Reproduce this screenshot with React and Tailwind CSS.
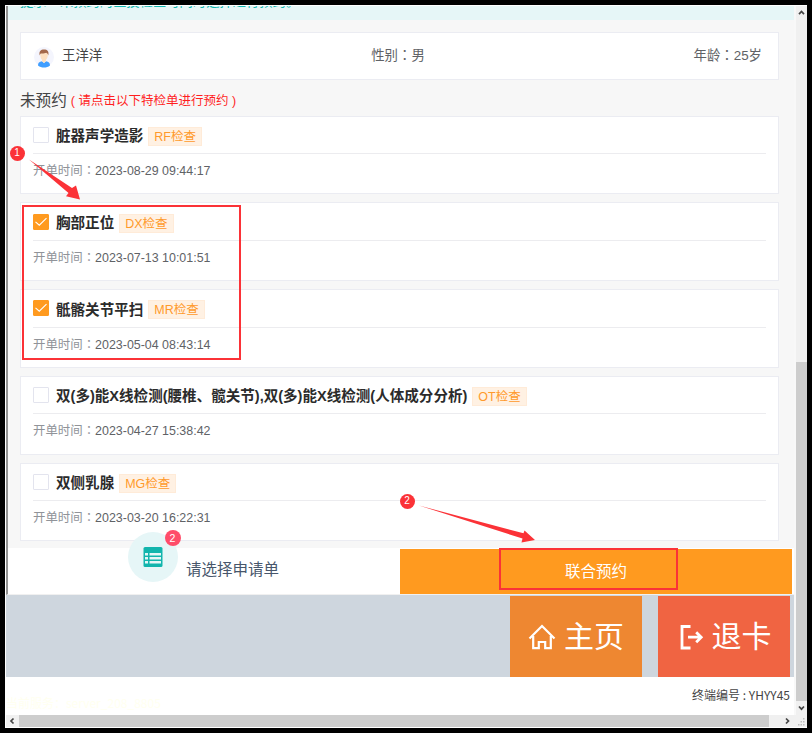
import React, { useState } from 'react';

const initialOrders = [
  { id: 1, name: '脏器声学造影', tag: 'RF检查', time: '2023-08-29 09:44:17', checked: false },
  { id: 2, name: '胸部正位', tag: 'DX检查', time: '2023-07-13 10:01:51', checked: true },
  { id: 3, name: '骶髂关节平扫', tag: 'MR检查', time: '2023-05-04 08:43:14', checked: true },
  { id: 4, name: '双(多)能X线检测(腰椎、髋关节),双(多)能X线检测(人体成分分析)', tag: 'OT检查', time: '2023-04-27 15:38:42', checked: false },
  { id: 5, name: '双侧乳腺', tag: 'MG检查', time: '2023-03-20 16:22:31', checked: false }
];

// full-width colon, centred in its box
const Colon = () => <span className="font-['Noto_Sans_CJK_TC',sans-serif] leading-none" lang="zh-TW">：</span>;

const Avatar = () => (
  <svg viewBox="0 0 20 20" className="w-5 h-5 mt-[3px] overflow-visible">
    <circle cx="10" cy="10" r="10" fill="#f4f5fd" />
    <path d="M4 18.500C3.900 16 5.500 14.500 8 14.200L10 16l2-1.800c2.500.3 4.100 1.800 4 4.300-1.700 1.400-3.700 2-6 2s-4.300-.6-6-2z" fill="#409eff" />
    <path d="M6.200 6.500C6.200 4.500 8 4 10 4s3.900.7 3.900 3c0 2.400-.6 4.700-1.900 5.800v1.400L10 16l-2-1.800v-1.400c-1.300-1.100-1.800-3.800-1.800-6.300z" fill="#fde0c0" />
    <path d="M5.700 8.500C4.700 4.500 6.800 2.600 10 2.600c3.400 0 5.200 2 4.300 5.900-.3-1.500-1-2.300-2-2.800-1.500.8-3.800.8-5.300.7-.8.400-1.100 1.100-1.300 2.100z" fill="#a4694a" />
  </svg>
);

const Checkbox = ({ checked, onChange }) => (
  <button
    type="button"
    onClick={onChange}
    className={`w-4 h-4 shrink-0 rounded-[1px] border flex items-center justify-center ${checked ? 'bg-[#ff9a1f] border-[#ff9a1f]' : 'bg-white border-[#e3e4ee]'}`}
  >
    {checked && (
      <svg viewBox="0 0 12 10" className="w-3 h-2.5 shrink-0" fill="none" stroke="#fff" strokeWidth="1.1">
        <path d="M.5 4.800l3.800 3.400L11.500 1.200" />
      </svg>
    )}
  </button>
);

const OrderCard = ({ order, onToggle }) => (
  <div className="h-[78.75px] bg-white border border-[#ebecf2] px-3">
    <div className="h-[37.500px] flex items-center border-b border-[#ececef]">
      <Checkbox checked={order.checked} onChange={() => onToggle(order.id)} />
      <span className="ml-[7px] mt-[2.500px] text-[14.550px] leading-5 font-bold text-[#2b2b2b] whitespace-nowrap">{order.name}</span>
      <span className="ml-[5px] mt-[3px] h-[19px] px-[5px] border border-[#ffebd8] bg-[#fff1e3] text-[12.500px] leading-[18px] text-[#ff9a2b] whitespace-nowrap">
        {order.tag}
      </span>
    </div>
    <div className="pt-2 text-[12.430px] leading-[18px] text-[#606266] whitespace-nowrap">
      <span className="text-[#909399]">开单时间<Colon /></span>{order.time}
    </div>
  </div>
);

const VerticalScrollbar = () => (
  <div className="w-[13px] shrink-0 bg-[#f0f0f0] border-l-2 border-[#f8f8f8] flex flex-col items-center">
    <svg viewBox="0 0 11 14" className="w-[11px] h-[14px]" fill="none" stroke="#444" strokeWidth="1.700">
      <path d="M3 8.200L5.500 5.500 8 8.200" />
    </svg>
    <div className="w-full mt-[342px] h-[340px] bg-[#cdcdcd]" />
    <svg viewBox="0 0 11 14" className="w-[11px] h-[14px]" fill="none" stroke="#444" strokeWidth="1.700">
      <path d="M3 5.500L5.500 8.200 8 5.500" />
    </svg>
  </div>
);

const HorizontalScrollbar = () => (
  <div className="h-[12px] flex bg-[#f0f0f0] items-stretch">
    <svg viewBox="0 0 13 12" className="w-[13px] h-[12px]" fill="none" stroke="#444" strokeWidth="1.700">
      <path d="M7.500 3.500L5 6l2.500 2.500" />
    </svg>
    <div className="w-[750px] bg-[#cdcdcd]" />
    <svg viewBox="0 0 38 12" className="w-[38px] h-[12px]" fill="none" stroke="#444" strokeWidth="1.700">
      <path d="M17 3.500L19.500 6 17 8.500" />
      <g fill="#bdbdbd" stroke="none">
        <path d="M34 3h1.500v1.500H34zM34 6h1.500v1.500H34zM34 9h1.500v1.500H34zM31.500 6H33v1.500h-1.500zM31.500 9H33v1.500h-1.500zM29 9h1.500v1.500H29z" />
      </g>
    </svg>
  </div>
);

const Annotations = () => (
  <div className="absolute inset-0 pointer-events-none">
    <div className="absolute left-[22px] top-[205px] w-[219px] h-[155px] border-2 border-[#fb3237]" />
    <div className="absolute left-[499px] top-[548px] w-[179px] h-[42px] border-2 border-[#fb3237]" />
    <svg viewBox="0 0 812 733" className="absolute inset-0 w-[812px] h-[733px]" fill="#fb3237">
      <path d="M29 159.500L72 188 76 185.500 80 199.500 66 196.200 68.500 193z" />
      <path d="M419 505.500L523.500 533.300 524.500 530.500 535 540 521.500 542.500 522.500 538.500z" />
    </svg>
    <span className="absolute left-[9.500px] top-[146px] w-[15px] h-[15px] rounded-full bg-[#fb3237] text-white text-[10px] leading-[14px] text-center">1</span>
    <span className="absolute left-[399.500px] top-[494px] w-[15px] h-[15px] rounded-full bg-[#fb3237] text-white text-[10px] leading-[14px] text-center">2</span>
  </div>
);

const App = () => {
  const [orders, setOrders] = useState(initialOrders);

  const handleToggle = (id) => {
    setOrders(prev => prev.map(o => (o.id === id ? { ...o, checked: !o.checked } : o)));
  };

  const count = orders.filter(o => o.checked).length;

  return (
    <div className="relative w-[812px] h-[733px] overflow-hidden bg-black p-[5px] font-['Liberation_Sans','Noto_Sans_CJK_SC',sans-serif]">
      <div className="w-[802px] h-[723px] bg-white pl-px pt-px flex flex-col">
        <div className="flex h-[709px]">
          <div className="w-[788px] shrink-0 flex flex-col">
            <div className="h-[589px] flex flex-col border-l-2 border-[#929292] border-b border-b-[#f0f0f0] bg-[#f7f7f7] overflow-hidden">
              <div className="h-[14px] shrink-0 bg-[#e6f6f7] overflow-hidden">
                <p className="-mt-[12px] ml-3 text-[13.300px] leading-4 text-[#14b8b0] whitespace-nowrap">
                  提示<Colon />未预约的医技检查可同时选择进行预约。
                </p>
              </div>

              <div className="h-[528px] shrink-0 pl-3 pr-[15px] pt-3 overflow-hidden">
                <div className="h-[47.500px] px-[13px] bg-white border border-[#ebecf2] grid grid-cols-3 items-center text-[13.400px] leading-5 text-[#606266]">
                  <div className="flex items-center text-[#444]">
                    <Avatar />
                    <span className="ml-[8px] mt-px">王洋洋</span>
                  </div>
                  <div className="text-center pr-[3px]">性别<Colon />男</div>
                  <div className="text-right pr-[3px]">年龄<Colon />25岁</div>
                </div>

                <h2 className="h-[36px] flex items-center pt-[6px] text-[15.600px] text-[#444]">
                  未预约
                  <span className="ml-1 mt-[2px] text-[12.500px] text-[#ff1f1f]">( 请点击以下特检单进行预约 )</span>
                </h2>

                <div className="flex flex-col gap-2">
                  {orders.map(order => (
                    <OrderCard key={order.id} order={order} onToggle={handleToggle} />
                  ))}
                </div>
              </div>

              <div className="h-[46px] shrink-0 bg-white flex">
                <div className="w-[392px] flex items-start pl-[120px]">
                  <div className="relative -mt-[16px] w-[50px] h-[50px] rounded-full bg-[#e6f6f7] flex items-center justify-center">
                    <svg viewBox="0 0 20 20" className="w-5 h-5">
                      <rect x="0.500" y="0" width="19" height="20" rx="1.500" fill="#12b5ad" />
                      <path d="M2 6h3v2.400H2zM6.500 6H18v2.400H6.500zM2 10h3v2.400H2zM6.500 10H18v2.400H6.500zM2 14h3v2.400H2zM6.500 14H18v2.400H6.500z" fill="#e6f6f7" />
                    </svg>
                    <span className="absolute left-[36.500px] -top-[2px] w-4 h-4 rounded-full bg-[#ff4d6a] text-white text-[10.500px] leading-4 text-center">{count}</span>
                  </div>
                  <span className="ml-2 mt-[10px] text-[15.500px] leading-6 text-[#47566b]">请选择申请单</span>
                </div>
                <button type="button" className="w-[392px] h-[45px] mt-px bg-[#ff9a1f] text-white text-[15.500px] leading-[45px]">
                  联合预约
                </button>
              </div>
            </div>

            <div className="h-[82px] flex justify-end gap-4 pr-[4px] pt-px bg-[#ced6de]">
              <button type="button" className="w-[132px] flex items-center justify-center gap-2 bg-[#ee8731] text-white text-[30px]">
                <svg viewBox="0 0 28 26" className="w-7 h-[26px]" fill="none" stroke="currentColor" strokeWidth="2.200">
                  <path d="M1.500 14.500L14 2l12.500 12.500M5.200 12v12.200h5.600V18h6.400v6.200h5.600V12" />
                </svg>
                主页
              </button>
              <button type="button" className="w-[132px] pl-[3px] flex items-center justify-center gap-2 bg-[#f06442] text-white text-[30px]">
                <svg viewBox="0 0 24 26" className="w-6 h-[26px]" fill="none" stroke="currentColor" strokeWidth="2.800">
                  <path d="M10.500 2.500H2v21.500h8.500M8 13.200H21M16.200 8.200l5 5-5 5" />
                </svg>
                退卡
              </button>
            </div>

            <div className="h-[38px] flex justify-between bg-white font-['Noto_Sans_CJK_SC',sans-serif] pr-1 whitespace-nowrap">
              <span className="pt-[18px] text-[12px] leading-4 text-[#fffff0]">当前服务：server_208_8805</span>
              <span className="pt-[10px] text-[12px] leading-4 text-[#444]">终端编号 : YHYY45</span>
            </div>
          </div>
          <VerticalScrollbar />
        </div>
        <HorizontalScrollbar />
      </div>
      <Annotations />
    </div>
  );
};

export default App;
